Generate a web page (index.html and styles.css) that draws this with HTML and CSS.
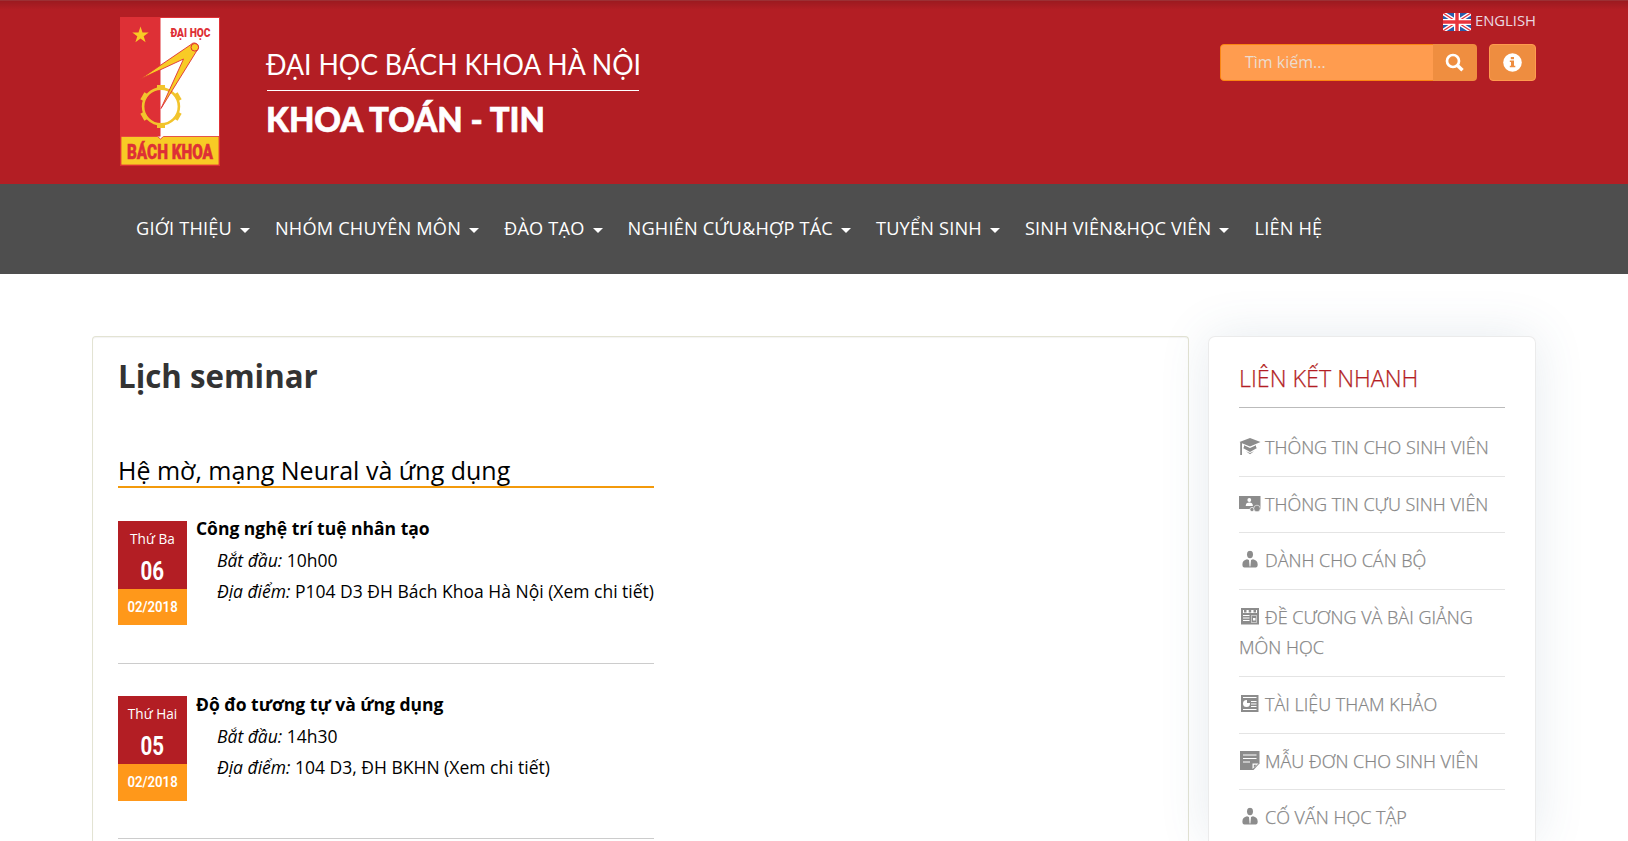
FILE: index.html
```html
<!DOCTYPE html>
<html lang="vi">
<head>
<meta charset="utf-8">
<title>Lịch seminar</title>
<link rel="stylesheet" href="styles.css">
</head>
<body>
<svg class="defs" width="0" height="0">
  <symbol id="i-user" viewBox="0 0 16 18"><ellipse cx="8" cy="4" rx="3" ry="3.7"/><path d="M5 8.800 7 9.500 7.600 16h.8L9 9.500l2-.7c3 .5 4.700 2.600 4.700 5.200 0 2-.7 3-2 3H2.400c-1.400 0-2-1-2-3 0-2.600 1.600-4.700 4.600-5.200z"/></symbol>
</svg>
<header class="top">
  <div class="brand">
    <svg class="logo" width="100" height="150" viewBox="0 0 100 150">
      <rect x="0.500" y="0.500" width="99" height="148" fill="#fff" stroke="#de3036"/>
      <rect x="0.500" y="0.500" width="40" height="119" fill="#de3036"/>
      <path d="M1 119.500h36.500l3 2.500 3-2.500H99V148H1z" fill="#f8cb25" stroke="#de3036" stroke-width=".8"/>
      <path d="M20.500 9.500l2 6h6.200l-5 3.700 1.900 6-5.100-3.700-5.100 3.700 1.900-6-5-3.700h6.200z" fill="#f8cb25"/>
      <g transform="translate(41 89.500)" fill="#f2c42c">
        <circle r="17.900" fill="none" stroke="#f2c42c" stroke-width="2.600"/>
        <path d="M-4-17v-4.500h8v4.500z"/><path d="M-4-17v-4.500h8v4.500z" transform="rotate(60)"/><path d="M-4-17v-4.500h8v4.500z" transform="rotate(120)"/><path d="M-4-17v-4.500h8v4.500z" transform="rotate(180)"/><path d="M-4-17v-4.500h8v4.500z" transform="rotate(240)"/><path d="M-4-17v-4.500h8v4.500z" transform="rotate(300)"/>
      </g>
      <path d="M19.500 62.500 71 27.500c3-3.500 8-.5 7.500 3.500L41 91.500 63.500 42z" fill="#f8cb25" stroke="#de3036" stroke-width=".9"/>
      <circle cx="74.800" cy="30.300" r="3.800" fill="#f8cb25" stroke="#de3036"/>
      <text class="seal seal-s" x="50.500" y="20" textLength="40" lengthAdjust="spacingAndGlyphs">ĐẠI HỌC</text>
      <text class="seal seal-l" x="7" y="141.500" textLength="86" lengthAdjust="spacingAndGlyphs">BÁCH KHOA</text>
    </svg>
    <svg class="wordmark" width="380" height="100" viewBox="0 0 380 100">
      <text class="wm1" x="0" y="30.500" textLength="375" lengthAdjust="spacingAndGlyphs">ĐẠI HỌC BÁCH KHOA HÀ NỘI</text>
      <rect x="1" y="46" width="372" height="1"/>
      <text class="wm2" x="0" y="87.500" textLength="279" lengthAdjust="spacingAndGlyphs">KHOA TOÁN - TIN</text>
    </svg>
  </div>
  <div class="tools">
    <a class="lang"><svg width="28" height="18" viewBox="0 0 28 18"><rect width="28" height="18" fill="#2a5caa"/><path d="M0 0l28 18M28 0L0 18" stroke="#fff" stroke-width="4"/><path d="M0 0l28 18M28 0L0 18" stroke="#e8323c" stroke-width="1.200"/><path d="M14 0v18M0 9h28" stroke="#fff" stroke-width="6"/><path d="M14 0v18M0 9h28" stroke="#e8323c" stroke-width="3.400"/></svg><span>ENGLISH</span></a>
    <div class="row">
      <div class="search"><span class="field">Tìm kiếm...</span><span class="go"><svg width="20" height="20" viewBox="0 0 20 20" fill="none" stroke="#fff"><circle cx="8" cy="8" r="6" stroke-width="2.700"/><path d="M12.500 12.500 17.500 17.200" stroke-width="3.500"/></svg></span></div>
      <div class="info"><svg width="19" height="19" viewBox="0 0 19 19"><circle cx="9.500" cy="9.500" r="9.300" fill="#fff"/><path d="M7.800 4h3.200v2.200H7.800zM6.800 7.500H11v5.200h1.300v1.600H6.800v-1.600H8V9.100H6.800z" fill="#ee8d40"/></svg></div>
    </div>
  </div>
</header>
<nav class="menu">
  <a><span>GIỚI THIỆU</span><i></i></a>
  <a><span>NHÓM CHUYÊN MÔN</span><i></i></a>
  <a><span>ĐÀO TẠO</span><i></i></a>
  <a><span>NGHIÊN CỨU&amp;HỢP TÁC</span><i></i></a>
  <a><span>TUYỂN SINH</span><i></i></a>
  <a><span>SINH VIÊN&amp;HỌC VIÊN</span><i></i></a>
  <a><span>LIÊN HỆ</span></a>
</nav>
<div class="page">
  <main class="card">
    <h1>Lịch seminar</h1>
    <section class="seminars">
      <h2>Hệ mờ, mạng Neural và ứng dụng</h2>
      <article>
        <div class="date"><div class="day"><span>Thứ Ba</span><b>06</b></div><div class="month"><span>02/2018</span></div></div>
        <div class="body"><strong>Công nghệ trí tuệ nhân tạo</strong><p><em>Bắt đầu:</em> 10h00</p><p><em>Địa điểm:</em> P104 D3 ĐH Bách Khoa Hà Nội (Xem chi tiết)</p></div>
      </article>
      <article>
        <div class="date"><div class="day"><span>Thứ Hai</span><b>05</b></div><div class="month"><span>02/2018</span></div></div>
        <div class="body"><strong>Độ đo tương tự và ứng dụng</strong><p><em>Bắt đầu:</em> 14h30</p><p><em>Địa điểm:</em> 104 D3, ĐH BKHN (Xem chi tiết)</p></div>
      </article>
    </section>
  </main>
  <aside class="side">
    <h3>LIÊN KẾT NHANH</h3>
    <ul>
      <li><svg class="ic" viewBox="0 0 22 19"><path d="M11 1 21.500 5 11 9.500 3 6.200V18H1.200V5.200L.5 5zM5 8.300l6 2.700 6-2.700v2l1 .7-7 4-7-4 1-.7z"/><path d="M7 14.300 11 16l4-1.700-4 3z"/></svg>THÔNG TIN CHO SINH VIÊN</li>
      <li><svg class="ic" viewBox="0 0 22 19"><path d="M0 2h21.500v13H0z"/><circle cx="10.300" cy="6" r="1.900" fill="#fff"/><path d="M6.700 12c0-2.500 1.300-3.500 3.600-3.500s3.600 1 3.600 3.500z" fill="#fff"/><circle cx="13" cy="15.500" r="2.100" stroke="#fff" stroke-width=".7"/><circle cx="18" cy="14.500" r="3.300" stroke="#fff" stroke-width=".6"/></svg>THÔNG TIN CỰU SINH VIÊN</li>
      <li><svg class="ic"><use href="#i-user" x="3" y="0.500" width="16" height="18"/></svg>DÀNH CHO CÁN BỘ</li>
      <li><svg class="ic" viewBox="0 0 22 19"><path d="M2 1h18v16.500H2z"/><path d="M4 3h14v3H4zM4 8h6.500v1H4zM4 10.500h6.500v1H4zM4 13h6.500v1H4zM12 8.500h6v7h-6z" fill="#fff"/><path d="M5 3h2.500v2.500H5zM9.700 3h2.500v2.500H9.700zM14.500 3H17v2.500h-2.500zM12.500 9h5v6h-5z"/><path d="M14 11h2.500v2.500H14z" fill="#fff"/></svg>ĐỀ CƯƠNG VÀ BÀI GIẢNG MÔN HỌC</li>
      <li><svg class="ic" viewBox="0 0 22 19"><path d="M2 1h17.500v17H2z"/><path d="M4 3h13.500v1H4zM4 15h13.500v1H4zM12 7h5.500v1H12zM12 9.500h5.500v1H12zM12 12h5.500v1H12z" fill="#fff"/><circle cx="7.500" cy="9.500" r="3.500" fill="#fff"/><path d="M8 9V6h3v3z"/></svg>TÀI LIỆU THAM KHẢO</li>
      <li><svg class="ic" viewBox="0 0 22 19"><path d="M1 0h19.500v12.500L14.500 19H1z"/><path d="M4 4h13.500M4 7.500h13.500M4 11h7" stroke="#fff"/><path d="M13.500 18v-5.500h6z" fill="#fff"/><path d="M14.800 16.500v-2.700h2.800z"/></svg>MẪU ĐƠN CHO SINH VIÊN</li>
      <li><svg class="ic"><use href="#i-user" x="3" y="0.500" width="16" height="18"/></svg>CỐ VẤN HỌC TẬP</li>
    </ul>
  </aside>
</div>
</body>
</html>
```
FILE: styles.css
```css
* { box-sizing: border-box; }
html, body { overflow: hidden; }
body { margin: 0; height: 841px; background: #fff; color: #000; font-family: "Open Sans", "Noto Sans", sans-serif; }
.defs { position: absolute; }
h1, h2, h3, p, ul { margin: 0; padding: 0; }
ul { list-style: none; }

.top { display: flex; justify-content: space-between; height: 184px; padding: 0 92px 0 120px; background: #b31e24 linear-gradient(rgba(0, 0, 0, .13), transparent 9px); border-top: 1px solid #9c3034; }
.brand { display: flex; padding-top: 16px; }
.logo { overflow: visible; }
.wordmark { margin: 27px 0 0 46px; fill: #fff; overflow: visible; }
.seal { font-family: Roboto, sans-serif; font-weight: 900; fill: #de3036; }
.seal-s { font-size: 13.500px; }
.seal-l { font-size: 20.500px; stroke: #de3036; stroke-width: .5; }
.wm1 { font: 400 28px Lato, sans-serif; }
.wm2 { font: 900 33.500px Lato, sans-serif; stroke: #fff; stroke-width: .6; }

.tools { display: flex; flex-direction: column; align-items: flex-end; padding-top: 12px; }
.lang { display: flex; gap: 4px; height: 18px; line-height: 15px; font-size: 14.800px; color: #ead9e0; }
.row { display: flex; gap: 12px; margin-top: 13px; }
.search { display: flex; width: 257px; height: 37px; border-radius: 4px; overflow: hidden; }
.field { flex: 1; padding-left: 24px; line-height: 34px; font-size: 16px; color: #ecdccf; background: #ff9c4f; border: 1px solid #fb8512; border-right: 0; border-radius: 4px 0 0 4px; }
.go { display: flex; align-items: center; justify-content: center; width: 44px; background: #ef8e40; }
.info { display: flex; align-items: center; justify-content: center; width: 47px; height: 37px; border: 1px solid #ff9c4f; border-radius: 4px; background: #ee8d40; }

.menu { display: flex; height: 90px; padding: 0 0 2px 136px; align-items: center; gap: 25px; background: #4e4e4e; color: #fff; font-size: 18.200px; letter-spacing: .18px; white-space: nowrap; }
.menu a { display: flex; align-items: center; gap: 8px; }
.menu i { margin-top: 5px; border: 5px solid transparent; border-top-color: #fff; border-bottom: 0; }

.page { display: flex; gap: 19px; align-items: flex-start; height: 567px; padding: 62px 92px 0; overflow: hidden; }
.card { width: 1097px; height: 505px; padding: 16px 25px 0; border: 1px solid #e3e3d3; border-bottom: 0; border-radius: 4px 4px 0 0; box-shadow: inset 0 1px 1px rgba(0, 0, 0, .05); }
h1 { line-height: 46px; font-size: 31.250px; font-weight: 700; color: #333; }
.seminars { width: 536px; margin-top: 54px; }
h2 { height: 35px; line-height: 34px; border-bottom: 2px solid #f39a0b; font-size: 25px; font-weight: 400; white-space: nowrap; }
article { display: flex; gap: 9px; height: 176px; padding-top: 33px; border-bottom: 1px solid #ccc; }
article + article { height: 175px; padding-top: 32px; }
article + article .body { margin-top: -7px; }
article + article .month { height: 37px; }
.date { width: 69px; color: #fff; text-align: center; }
.day { height: 68px; padding-top: 6px; background: #b31e24; }
.day span { display: block; line-height: 24px; font-size: 13.600px; }
.day b { display: inline-block; line-height: 41px; font-family: Roboto, sans-serif; font-size: 25px; transform: scaleX(.82); }
.month { height: 36px; line-height: 36px; background: #ff981a; font-family: Roboto, sans-serif; font-size: 15px; font-weight: 600; }
.month span { display: inline-block; transform: scaleX(.88); }
.body { margin-top: -8px; font-size: 17.500px; line-height: 31.500px; white-space: nowrap; }
.body strong { display: block; }
.body p { padding-left: 21px; }

.side { width: 328px; height: 505px; padding: 22px 30px 0; border: 1px solid #ebebeb; border-bottom: 0; border-radius: 7px 7px 0 0; background: #fff; box-shadow: 0 0 50px rgba(60, 100, 130, .13); }
h3 { height: 49px; padding-top: 1px; line-height: 36px; border-bottom: 1px solid #bbb; font-size: 23.300px; font-weight: 300; color: #b31e24; -webkit-text-stroke: .25px #b31e24; white-space: nowrap; }
.side ul { padding-top: 12px; }
.side li { padding: 12px 0 13px; border-bottom: 1px solid #e4e4e4; line-height: 30.600px; font-size: 18px; color: #868686; font-weight: 300; -webkit-text-stroke: .25px #868686; }
.ic { width: 22px; height: 19px; margin-right: 4px; vertical-align: -2px; fill: #8c8c8c; }
```
